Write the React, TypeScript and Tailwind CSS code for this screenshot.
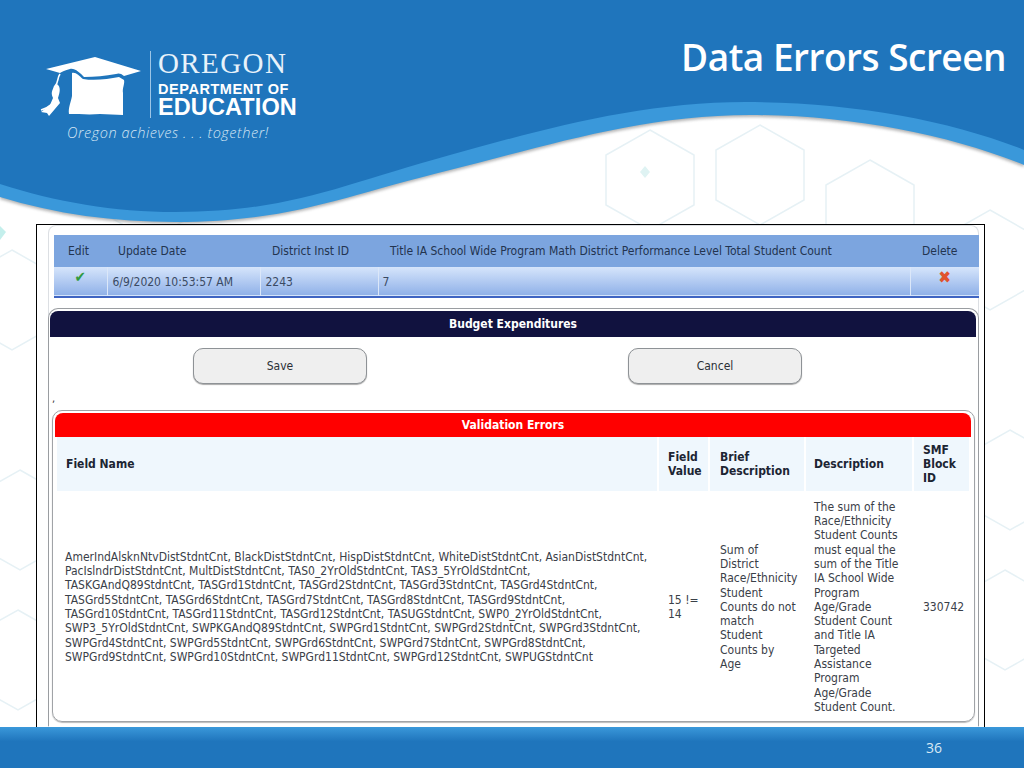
const LINES = [
  'AmerIndAlsknNtvDistStdntCnt, BlackDistStdntCnt, HispDistStdntCnt, WhiteDistStdntCnt, AsianDistStdntCnt,',
  'PacIslndrDistStdntCnt, MultDistStdntCnt, TAS0_2YrOldStdntCnt, TAS3_5YrOldStdntCnt,',
  'TASKGAndQ89StdntCnt, TASGrd1StdntCnt, TASGrd2StdntCnt, TASGrd3StdntCnt, TASGrd4StdntCnt,',
  'TASGrd5StdntCnt, TASGrd6StdntCnt, TASGrd7StdntCnt, TASGrd8StdntCnt, TASGrd9StdntCnt,',
  'TASGrd10StdntCnt, TASGrd11StdntCnt, TASGrd12StdntCnt, TASUGStdntCnt, SWP0_2YrOldStdntCnt,',
  'SWP3_5YrOldStdntCnt, SWPKGAndQ89StdntCnt, SWPGrd1StdntCnt, SWPGrd2StdntCnt, SWPGrd3StdntCnt,',
  'SWPGrd4StdntCnt, SWPGrd5StdntCnt, SWPGrd6StdntCnt, SWPGrd7StdntCnt, SWPGrd8StdntCnt,',
  'SWPGrd9StdntCnt, SWPGrd10StdntCnt, SWPGrd11StdntCnt, SWPGrd12StdntCnt, SWPUGStdntCnt',
];

const BRIEF = ['Sum of', 'District', 'Race/Ethnicity', 'Student', 'Counts do not', 'match', 'Student', 'Counts by', 'Age'];

const DESCRIPTION = [
  'The sum of the', 'Race/Ethnicity', 'Student Counts', 'must equal the', 'sum of the Title', 'IA School Wide', 'Program',
  'Age/Grade', 'Student Count', 'and Title IA', 'Targeted', 'Assistance', 'Program', 'Age/Grade', 'Student Count.',
];

const FONT = "font-['DejaVu_Sans_Condensed','DejaVu_Sans',sans-serif]";

function Lines({ items }: { items: string[] }) {
  return (
    <>
      {items.map((l, i) => (
        <div key={i} className="whitespace-nowrap">{l}</div>
      ))}
    </>
  );
}

function Backdrop() {
  const hexes = [
    [650, 180], [760, 175], [870, 210], [990, 260], [1010, 480], [1005, 620], [12, 300], [20, 520], [18, 660], [150, 190],
  ];
  return (
    <svg className="absolute inset-0" width="1024" height="768" viewBox="0 0 1024 768" fill="none">
      {hexes.map(([x, y], i) => (
        <path
          key={i}
          d={`M${x} ${y - 50}l44 25v50l-44 25l-44 -25v-50z`}
          stroke="#e6f1f5"
          strokeWidth="1.5"
        />
      ))}
      <path d="M0 226l6 6l-6 8z" fill="#c4efec" />
      <path d="M640 172l5 -6l5 6l-5 6z" fill="#dff3f3" />
      <path d="M0 199 C55 216 115 224 175 224 C290 224 340 199 450 172 C540 150 640 117 750 117 C850 117 950 137 1024 167 V0 H0Z" fill="#777" opacity="0.55" style={{ filter: 'blur(1.5px)' }} />
      <path d="M0 197 C55 214 115 222 175 222 C290 222 340 197 450 170 C540 148 640 115 750 115 C850 115 950 135 1024 165 V0 H0Z" fill="#3a98da" />
      <path d="M0 184 C55 202 115 212 175 212 C290 212 340 185 450 155 C540 130 640 102 745 102 C850 102 950 120 1024 150 V0 H0Z" fill="#1f75bc" />
    </svg>
  );
}

function CapLogo() {
  return (
    <svg width="104" height="64" viewBox="40 54 104 64" className="shrink-0">
      <path fill="#fff" d="M46 69 L95 57 L141 71 L124 76 C121 73 118 73 116 74 C105 76 95 77 84 77 C80 73 75 68 70 69 C65 70 62 72 60 73Z" />
      <path fill="#fff" d="M72 73 C76 72 79 76 83 79 C95 81 108 79 119 77 L124 80 C125 84 122 88 123 93 V115 L100 114 C90 115 78 114 69 114 C68 108 71 102 72 96Z" />
      <path fill="none" stroke="#fff" strokeWidth="1.6" d="M60 74 C57 78 59 82 55 86 C52 90 57 92 56 97 C55 102 49 108 41 110" />
      <path fill="#fff" d="M57 84 C61 87 60 92 58 98 L60 103 L49 116 L47 113 L41 112 L50 105 L53 98 C50 92 53 88 57 84Z" />
    </svg>
  );
}

function Logo() {
  return (
    <div className="flex flex-col">
      <div className="flex items-start">
        <CapLogo />
        <div className="w-px h-[67px] -mt-[3px] ml-[6px] mr-[7px] bg-[#9cc5e6]" />
        <div className="flex flex-col text-white -mt-[5px]">
          <div className="font-['Liberation_Serif',serif] text-[29px] leading-[28px] tracking-[1.4px] font-normal text-[#e8f2fa] whitespace-nowrap">OREGON</div>
          <div className="font-['Liberation_Sans',sans-serif] font-bold text-[14.5px] leading-[16px] mt-[4px] tracking-[0.55px] whitespace-nowrap">DEPARTMENT OF</div>
          <div className="font-['Liberation_Sans',sans-serif] font-bold text-[23.5px] leading-[21px] tracking-[0.1px] whitespace-nowrap">EDUCATION</div>
        </div>
      </div>
      <div className="font-['Open_Sans',sans-serif] italic font-light text-[14.5px] leading-[18px] text-[#d5e6f4] ml-[27px] mt-[6px] tracking-[0.55px] whitespace-nowrap">
        Oregon achieves . . . together!
      </div>
    </div>
  );
}

function GridSection() {
  return (
    <table className={`w-[925px] border-collapse text-[12px] ${FONT} text-[#23344f]`}>
      <thead>
        <tr className="h-[32px] bg-[#7ca5df] text-left font-normal">
          <th className="w-[53px] pl-[14px] font-normal">Edit</th>
          <th className="w-[153px] pl-[11px] font-normal">Update Date</th>
          <th className="w-[118px] pl-[12px] font-normal">District Inst ID</th>
          <th className="w-[532px] pl-[12px] font-normal">Title IA School Wide Program Math District Performance Level Total Student Count</th>
          <th className="pl-[12px] font-normal">Delete</th>
        </tr>
      </thead>
      <tbody>
        <tr className="h-[30px] bg-gradient-to-b from-[#d6e5fb] to-[#90b1e8] border-b-2 border-[#3e64c2] text-[#3a4a63]">
          <td className="text-center align-top pt-[2px]">
            <span className="inline-block text-[15px] leading-[16px] font-bold text-[#2f9a3f]">✔</span>
          </td>
          <td className="pl-[5px] border-l border-[#dbe7f9]">6/9/2020 10:53:57 AM</td>
          <td className="pl-[5px] border-l border-[#dbe7f9]">2243</td>
          <td className="pl-[4px] border-l border-[#dbe7f9]">7</td>
          <td className="text-center border-l border-[#dbe7f9] align-top pt-[2px]">
            <span className="inline-block text-[17px] leading-[16px] font-bold text-[#e0532f]">✖</span>
          </td>
        </tr>
      </tbody>
    </table>
  );
}

function ErrorsTable() {
  const th = 'bg-[#eff7fd] text-left font-bold text-[#1c2533] align-middle border-x-[2px] border-white';
  return (
    <table className="w-[916px] table-fixed border-collapse text-[12px] leading-[14.33px]">
      <thead>
        <tr className="h-[54px]">
          <th className={`${th} w-[602px] pl-[9px]`}>Field Name</th>
          <th className={`${th} w-[51px] pl-[9px]`}>Field<br />Value</th>
          <th className={`${th} w-[96px] pl-[10px]`}>Brief<br />Description</th>
          <th className={`${th} w-[108px] pl-[8px]`}>Description</th>
          <th className={`${th} pl-[9px]`}>SMF<br />Block<br />ID</th>
        </tr>
      </thead>
      <tbody className="text-[#3a4048]">
        <tr className="h-[230px]">
          <td className="pl-[9px] align-middle pt-[2px]"><Lines items={LINES} /></td>
          <td className="pl-[10px] align-middle pt-[2px]"><Lines items={['15 !=', '14']} /></td>
          <td className="pl-[11px] align-middle pt-[2px]"><Lines items={BRIEF} /></td>
          <td className="pl-[9px] align-middle pt-[2px]"><Lines items={DESCRIPTION} /></td>
          <td className="pl-[10px] align-middle pt-[2px]">330742</td>
        </tr>
      </tbody>
    </table>
  );
}

function PlainButton({ label }: { label: string }) {
  return (
    <button className="w-[174px] h-[36px] rounded-[10px] border border-[#8e9296] bg-[#efefef] shadow-[0_1px_1px_#aaa] text-[12px] text-[#2b3036]">
      {label}
    </button>
  );
}

export default function App() {
  return (
    <div className="relative w-[1024px] h-[768px] overflow-hidden bg-white">
      <Backdrop />

      <header className="relative h-[224px] flex justify-between items-start pl-[40px] pr-[18px]">
        <div className="pt-[54px]"><Logo /></div>
        <h1 className="font-['Open_Sans',sans-serif] font-semibold text-[37px] leading-[50px] text-white pt-[32px] tracking-[-0.5px] whitespace-nowrap">
          Data Errors Screen
        </h1>
      </header>

      <main className={`relative ml-[36px] w-[949px] h-[503px] bg-white border border-b-0 border-black ${FONT}`}>
        <div className="h-full ml-[11px] mr-[5px] pt-[2px] rounded-t-[8px] border-x border-t border-[#dcdfe3]">
          <div className="pl-[5px] pt-[7px]"><GridSection /></div>

          <section className="mt-[10px] -ml-[1px] w-[931px] h-[418px] rounded-t-[10px] border-x border-t border-[#9a9da1] pt-[2px] pl-[1px]">
            <div className="h-[26px] w-[926px] rounded-t-[8px] bg-[#11123f] text-white text-center font-bold text-[12px] leading-[26px]">
              Budget Expenditures
            </div>
            <div className="flex gap-[261px] pl-[143px] pt-[11px]">
              <PlainButton label="Save" />
              <PlainButton label="Cancel" />
            </div>
            <div className="pl-[2px] mt-[4px] h-[22px] text-[11px] leading-[22px] text-[#333]">,</div>

            <div className="ml-[2px] w-[923px] h-[312px] rounded-[10px] border border-[#a0a3a7] shadow-[0_1px_1px_#bbb] pt-[2px] pl-[2px]">
              <div className="h-[24px] w-[916px] rounded-t-[8px] bg-[#ff0000] text-white text-center font-bold text-[12px] leading-[24px]">
                Validation Errors
              </div>
              <ErrorsTable />
            </div>
          </section>
        </div>
      </main>

      <footer className="relative h-[41px] bg-gradient-to-b from-[#3a98da] to-[#1f75bc] to-[35%] pl-[926px] pt-[11px] font-['Open_Sans',sans-serif] text-[14px] leading-[20px] text-[#d8e9f5]">
        36
      </footer>
    </div>
  );
}
